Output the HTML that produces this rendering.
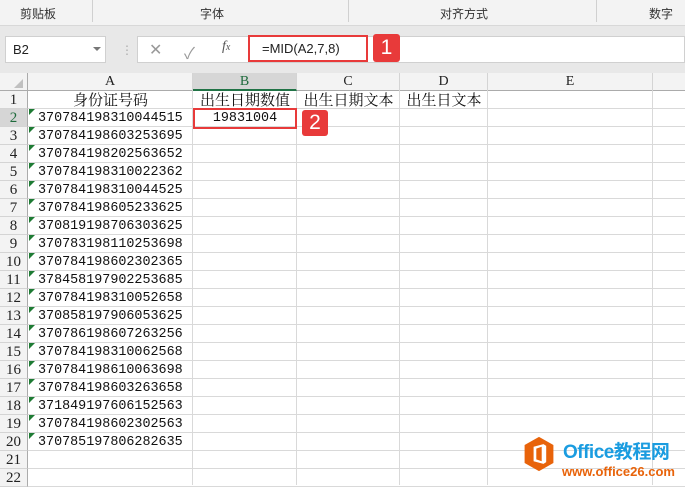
<!DOCTYPE html>
<html><head><meta charset="utf-8"><style>
*{margin:0;padding:0;box-sizing:border-box}
body{width:685px;height:485px;overflow:hidden;background:#fff;position:relative;font-family:"Liberation Sans","Noto Sans CJK SC",sans-serif}
.abs{position:absolute}
.rib{left:0;top:0;width:685px;height:26px;background:#f3f3f3;border-bottom:1px solid #d8d8d8}
.rt{top:5px;font-size:12px;color:#333}
.band{left:0;top:26px;width:685px;height:47px;background:#e8e8e8}
.hdr{left:0;top:73px;width:685px;height:18px;background:#f3f3f3;border-bottom:1px solid #ababab}
.ch{top:73px;height:18px;font-family:"Liberation Serif",serif;font-size:14px;text-align:center;line-height:18px;color:#222;border-right:1px solid #d4d4d4}
.rh{left:0;width:28px;height:18px;background:#f3f3f3;border-right:1px solid #ababab;border-bottom:1px solid #d4d4d4;font-family:"Liberation Serif",serif;font-size:15px;text-align:center;line-height:18px;color:#222}
.hl{left:28px;width:657px;height:1px;background:#d9d9d9}
.vl{top:91px;width:1px;height:394px;background:#d9d9d9}
.c{height:18px;line-height:20px;font-family:"Liberation Mono","Noto Sans CJK SC",monospace;font-size:13.4px;color:#111;white-space:nowrap}
.z{font-family:"Noto Serif CJK SC","Noto Sans CJK SC",serif;font-size:15px;line-height:18px}
.tri{width:0;height:0;border-top:6px solid #1e7b34;border-right:6px solid transparent}
.badge{background:#e83a3a;color:#fff;font-size:21px;text-align:center;border-radius:3px}
</style></head><body>
<div class="abs rib"></div>
<div class="abs rt" style="left:20px">剪贴板</div>
<div class="abs" style="left:92px;top:0;width:1px;height:22px;background:#d0d0d0"></div>
<div class="abs rt" style="left:200px">字体</div>
<div class="abs" style="left:348px;top:0;width:1px;height:22px;background:#d0d0d0"></div>
<div class="abs rt" style="left:440px">对齐方式</div>
<div class="abs" style="left:596px;top:0;width:1px;height:22px;background:#d0d0d0"></div>
<div class="abs rt" style="left:649px">数字</div>
<div class="abs band"></div>
<div class="abs" style="left:5px;top:36px;width:101px;height:27px;background:#fff;border:1px solid #d0d0d0;font-size:13px;line-height:25px;padding-left:7px;color:#222">B2<span style="position:absolute;left:87px;top:10px;border-left:4px solid transparent;border-right:4px solid transparent;border-top:4px solid #777"></span></div>
<div class="abs" style="left:121px;top:43px;color:#aaa;font-size:12px">⋮</div>
<div class="abs" style="left:137px;top:36px;width:548px;height:27px;background:#fff;border:1px solid #d0d0d0"></div>
<div class="abs" style="left:149px;top:40px;color:#999;font-size:16px">✕</div>
<div class="abs" style="left:184px;top:40px;color:#999;font-size:16px">✓</div>
<div class="abs" style="left:222px;top:39px;color:#555;font-size:14px;font-family:'Liberation Serif',serif;font-style:italic">f<span style="font-size:10px">x</span></div>
<div class="abs" style="left:248px;top:35px;width:120px;height:27px;border:2px solid #e83a3a;font-size:13px;line-height:23px;padding-left:12px;color:#222">=MID(A2,7,8)</div>
<div class="abs badge" style="left:373px;top:34px;width:27px;height:28px;line-height:28px">1</div>
<div class="abs hdr"></div>
<div class="abs" style="left:0;top:73px;width:28px;height:18px;border-right:1px solid #ababab"><span style="position:absolute;right:4px;bottom:3px;border-left:9px solid transparent;border-bottom:9px solid #c0c0c0"></span></div>
<div class="abs ch" style="left:28px;width:165px">A</div>
<div class="abs ch" style="left:193px;width:104px;background:#d6d6d6;color:#1e6b3c;border-bottom:2px solid #217346">B</div>
<div class="abs ch" style="left:297px;width:103px">C</div>
<div class="abs ch" style="left:400px;width:88px">D</div>
<div class="abs ch" style="left:488px;width:165px">E</div>
<div class="abs vl" style="left:192px"></div>
<div class="abs vl" style="left:296px"></div>
<div class="abs vl" style="left:399px"></div>
<div class="abs vl" style="left:487px"></div>
<div class="abs vl" style="left:652px"></div>
<div id="rows"></div>
<script>
var ids=["370784198310044515","370784198603253695","370784198202563652","370784198310022362","370784198310044525","370784198605233625","370819198706303625","370783198110253698","370784198602302365","378458197902253685","370784198310052658","370858197906053625","370786198607263256","370784198310062568","370784198610063698","370784198603263658","371849197606152563","370784198602302563","370785197806282635"];
var h="";
for(var n=1;n<=22;n++){var t=91+(n-1)*18;
h+='<div class="abs rh" style="top:'+t+'px;'+(n==2?'background:#d6d6d6;color:#1e6b3c':'')+'">'+n+'</div>';
h+='<div class="abs hl" style="top:'+(t+17)+'px"></div>';
if(n>=2&&n<=20){h+='<div class="abs tri" style="left:29px;top:'+t+'px"></div><div class="abs c" style="left:38px;top:'+t+'px">'+ids[n-2]+'</div>';}
}
h+='<div class="abs c z" style="left:28px;top:91px;width:165px;text-align:center">身份证号码</div>';
h+='<div class="abs c z" style="left:193px;top:91px;width:104px;text-align:center">出生日期数值</div>';
h+='<div class="abs c z" style="left:297px;top:91px;width:103px;text-align:center">出生日期文本</div>';
h+='<div class="abs c z" style="left:400px;top:91px;width:88px;text-align:center">出生日文本</div>';
h+='<div class="abs c" style="left:193px;top:109px;width:104px;text-align:center">19831004</div>';
document.getElementById("rows").innerHTML=h;
</script>
<div class="abs" style="left:193px;top:108px;width:104px;height:21px;border:2px solid #e83a3a"></div>
<div class="abs badge" style="left:302px;top:110px;width:26px;height:26px;line-height:26px">2</div>
<svg class="abs" style="left:522px;top:436px" width="34" height="36" viewBox="0 0 36 40"><polygon points="18,1 34,10 34,30 18,39 2,30 2,10" fill="#e8630a"/><path d="M12,12 L23,9 L26,11 L26,29 L23,31 L12,28 Z" fill="#fff"/><path d="M15,14 L21,12 L21,28 L15,26 Z" fill="#e8630a"/></svg>
<div class="abs" style="left:563px;top:442px;font-size:19px;font-weight:bold;color:#1a9ce0;line-height:22px;white-space:nowrap;letter-spacing:-0.5px">Office教程网</div>
<div class="abs" style="left:562px;top:464px;font-size:13px;font-weight:bold;color:#e8630a;line-height:15px;white-space:nowrap">www.office26.com</div>
</body></html>
